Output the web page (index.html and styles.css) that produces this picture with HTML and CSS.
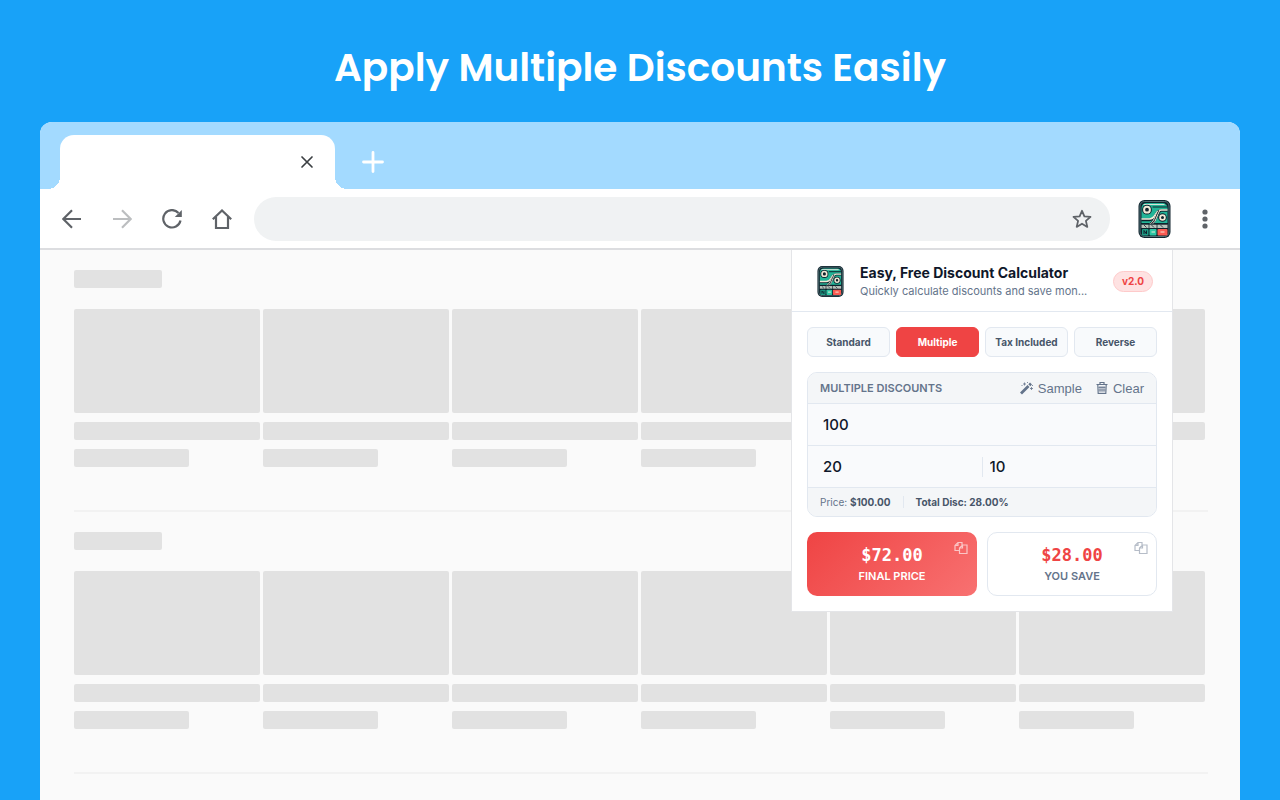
FILE: index.html
```html
<!doctype html>
<html lang="en">

<head>
  <meta charset="UTF-8">
  <title>Easy, Free Discount Calculator</title>
  <link rel="stylesheet" href="styles.css">
</head>

<body>
  <svg class="sprite" aria-hidden="true">
    <symbol id="logo" viewBox="0 0 32 38">
      <rect width="32" height="38" rx="6" fill="#10232d" />
      <rect x="1.5" y="1.5" width="29" height="35" rx="4.5" fill="none" stroke="#6f9495" stroke-width=".7" />
      <path d="M3 8a5 5 0 0 1 5-5h16a5 5 0 0 1 5 5v15H3z" fill="#22b497" />
      <path d="M5 4.500h21" stroke="#d9e4d8" stroke-width="1.200" />
      <path d="M14 7h15" stroke="#10232d" stroke-width="1.200" />
      <path d="M3 20h8c7 0 5-9.500 12-9.500h6" stroke="#10232d" stroke-width="2.400" fill="none" />
      <path d="M3 19h8c7 0 5-9 12-9h6" stroke="#f1ead7" stroke-width="1.600" fill="none" />
      <path d="M12 24c5-2 5-8 9-13" stroke="#10232d" stroke-width="3" fill="none" />
      <path d="M11 24c5-2 5-8 8-13M14 24c4-3 4-8 7-13" stroke="#f1ead7" stroke-width="1" fill="none" />
      <circle cx="8.500" cy="9.700" r="4.900" fill="#10232d" />
      <circle cx="8.500" cy="9.700" r="2.900" fill="#10232d" stroke="#f1ead7" stroke-width="2" />
      <circle cx="24" cy="17.500" r="4.300" fill="#10232d" />
      <circle cx="24" cy="17.500" r="2.400" fill="#10232d" stroke="#f1ead7" stroke-width="1.800" />
      <path d="M3 24.500h26V28H3z" fill="#b9c3bb" />
      <path d="M5.500 25l2.500 2.500M13 25l2.500 2.500M22 25l2.500 2.500" stroke="#10232d" stroke-width=".8" />
      <path d="M10.500 24v12M18.500 24v12M3 28.500h26M3 24h26" stroke="#10232d" stroke-width=".8" />
      <rect x="3.500" y="29" width="6.500" height="6.500" rx="1" fill="#1d9c85" />
      <rect x="11" y="29" width="7" height="6.500" rx="1" fill="#2fc7a5" />
      <rect x="19" y="29" width="10" height="6.500" rx="1" fill="#fa5b52" />
      <path d="M5.500 34v-3.500l2.500 3.500v-3.500" stroke="#10232d" fill="none" />
      <path d="M13 32h3.500M22 32h4" stroke="#f1ead7" stroke-width="1.200" />
    </symbol>
    <symbol id="copy" viewBox="0 0 14 14">
      <path d="M5.500 9.500H1v-5l3-3h4V4M1 4.500h3v-3M5.500 12.500V7l3-3H13v8.500zM5.500 7h3V4" fill="none" stroke="currentColor" stroke-width="1.200" />
    </symbol>
  </svg>

  <h1 class="headline">Apply Multiple Discounts Easily</h1>

  <div class="browser">
    <div class="tab-strip">
      <div class="browser-tab">
        <button class="icon-btn" aria-label="Close tab">
          <svg width="14" height="14" viewBox="0 0 14 14"><path d="M2 2l10 10M12 2L2 12" stroke="#3c4043" stroke-width="1.700" stroke-linecap="round" /></svg>
        </button>
      </div>
      <button class="icon-btn" aria-label="New tab">
        <svg width="22" height="22" viewBox="0 0 22 22"><path d="M11 1.500v19M1.500 11h19" stroke="#fff" stroke-width="2.800" stroke-linecap="round" /></svg>
      </button>
    </div>

    <div class="toolbar">
      <div class="nav">
        <button class="icon-btn" aria-label="Back">
          <svg width="20" height="20" viewBox="0 0 20 20"><path d="M19 10H1.500M10 1.300L1.300 10l8.700 8.700" class="line" /></svg>
        </button>
        <button class="icon-btn faded" aria-label="Forward">
          <svg width="20" height="20" viewBox="0 0 20 20"><path d="M1 10h17.500M10 1.300l8.700 8.700-8.700 8.700" class="line" /></svg>
        </button>
        <button class="icon-btn" aria-label="Reload">
          <svg width="20" height="20" viewBox="0 0 20 20"><path d="M18.500 11.500A8.700 8.700 0 1 1 16.500 4" class="line" /><path d="M19.800 1v7h-7z" fill="currentColor" /></svg>
        </button>
        <button class="icon-btn" aria-label="Home">
          <svg width="20" height="20" viewBox="0 0 20 20"><path d="M.8 10.300L10 1.500l9.200 8.800M4 8v11h12V8" class="line" /></svg>
        </button>
      </div>
      <div class="address">
        <input class="address-input" type="text" aria-label="Address">
        <button class="icon-btn" aria-label="Bookmark">
          <svg width="20" height="20" viewBox="0 0 20 20"><path d="M10 1.800l2.400 5.600 6.100.5-4.600 4 1.400 6L10 14.700 4.700 17.900l1.400-6-4.600-4 6.100-.5z" fill="none" stroke="currentColor" stroke-width="1.800" stroke-linejoin="round" /></svg>
        </button>
      </div>
      <button class="icon-btn" aria-label="Discount Calculator">
        <svg width="33" height="38"><use href="#logo" /></svg>
      </button>
      <button class="icon-btn menu-btn" aria-label="Menu">
        <svg width="6" height="20" viewBox="0 0 6 20" fill="currentColor"><circle cx="3" cy="3" r="2.600" /><circle cx="3" cy="10" r="2.600" /><circle cx="3" cy="17" r="2.600" /></svg>
      </button>
    </div>

    <div class="page">
      <section class="shelf">
        <div class="block title"></div>
        <div class="cards">
          <div class="card"><div class="block thumb"></div><div class="block"></div><div class="block short"></div></div>
          <div class="card"><div class="block thumb"></div><div class="block"></div><div class="block short"></div></div>
          <div class="card"><div class="block thumb"></div><div class="block"></div><div class="block short"></div></div>
          <div class="card"><div class="block thumb"></div><div class="block"></div><div class="block short"></div></div>
          <div class="card"><div class="block thumb"></div><div class="block"></div><div class="block short"></div></div>
          <div class="card"><div class="block thumb"></div><div class="block"></div><div class="block short"></div></div>
        </div>
      </section>
      <section class="shelf">
        <div class="block title"></div>
        <div class="cards">
          <div class="card"><div class="block thumb"></div><div class="block"></div><div class="block short"></div></div>
          <div class="card"><div class="block thumb"></div><div class="block"></div><div class="block short"></div></div>
          <div class="card"><div class="block thumb"></div><div class="block"></div><div class="block short"></div></div>
          <div class="card"><div class="block thumb"></div><div class="block"></div><div class="block short"></div></div>
          <div class="card"><div class="block thumb"></div><div class="block"></div><div class="block short"></div></div>
          <div class="card"><div class="block thumb"></div><div class="block"></div><div class="block short"></div></div>
        </div>
      </section>

      <main class="popup">
        <header class="popup-header">
          <svg width="27" height="31"><use href="#logo" /></svg>
          <div class="popup-heading">
            <h2>Easy, Free Discount Calculator</h2>
            <p>Quickly calculate discounts and save mon...</p>
          </div>
          <span class="version">v2.0</span>
        </header>

        <div class="popup-body">
          <nav class="modes">
            <button class="mode">Standard</button>
            <button class="mode active">Multiple</button>
            <button class="mode">Tax Included</button>
            <button class="mode">Reverse</button>
          </nav>

          <form class="calc">
            <div class="calc-header">
              <h3>MULTIPLE DISCOUNTS</h3>
              <button type="button" class="action">
                <svg width="13" height="14" viewBox="0 0 13 14"><path d="M1 12.500l7.500-7.500M9.300 4.200l1.700-1.700" stroke="currentColor" stroke-width="2.800" /><path d="M4.500 1.500v3M3 3h3M11.500 6v3M10 7.500h3M7.500 1v1M1.500 4.500h1M12 4.500h1" stroke="currentColor" stroke-width=".8" /></svg>
                Sample
              </button>
              <button type="button" class="action">
                <svg width="12" height="14" viewBox="0 0 12 14" fill="none" stroke="currentColor"><path d="M.5 3.500h11M4 3V1.500h4V3M1.800 3.500l.4 9h7.600l.4-9" stroke-width="1.200" /><path d="M4 5v6.500M6 5v6.500M8 5v6.500M2.500 6.500h7M2.500 9h7" stroke-width=".8" /></svg>
                Clear
              </button>
            </div>
            <div class="row">
              <input type="text" value="100" aria-label="Original price">
            </div>
            <div class="row">
              <input type="text" value="20" aria-label="First discount">
              <input type="text" value="10" aria-label="Second discount" class="split">
            </div>
            <div class="summary">
              <span>Price: <b>$100.00</b></span>
              <span class="total">Total Disc: 28.00%</span>
            </div>
          </form>

          <div class="results">
            <div class="result final">
              <strong>$72.00</strong>
              <span>FINAL PRICE</span>
              <button class="icon-btn copy" aria-label="Copy final price"><svg width="14" height="14"><use href="#copy" /></svg></button>
            </div>
            <div class="result">
              <strong>$28.00</strong>
              <span>YOU SAVE</span>
              <button class="icon-btn copy" aria-label="Copy savings"><svg width="14" height="14"><use href="#copy" /></svg></button>
            </div>
          </div>
        </div>
      </main>
    </div>
  </div>
</body>

</html>
```
FILE: styles.css
```css
* {
  box-sizing: border-box;
}

body {
  display: flex;
  flex-direction: column;
  min-height: 100vh;
  margin: 0;
  padding: 0 40px;
  background: #18a2f8;
  font-family: Inter, sans-serif;
}

h1,
h2,
h3,
p {
  margin: 0;
}

svg {
  display: block;
  flex: none;
}

button,
input {
  margin: 0;
  padding: 0;
  border: 0;
  background: none;
  font-family: inherit;
  color: inherit;
}

.sprite {
  position: absolute;
  width: 0;
  height: 0;
}

.headline {
  padding: 38px 0 24px;
  color: #fff;
  font: 600 39px/60px Poppins, Inter, sans-serif;
  text-align: center;
}

.icon-btn {
  display: flex;
  color: #5f6368;
}

.line {
  fill: none;
  stroke: currentColor;
  stroke-width: 2.2;
}

/* browser frame */
.browser {
  display: flex;
  flex: 1;
  flex-direction: column;
  border-radius: 12px 12px 0 0;
  background: #fafafa;
  overflow: hidden;
}

.tab-strip {
  display: flex;
  align-items: center;
  gap: 27px;
  padding: 13px 20px 0;
  background: #a3daff;
}

.browser-tab {
  position: relative;
  display: flex;
  align-items: center;
  justify-content: flex-end;
  width: 275px;
  height: 54px;
  padding-right: 21px;
  border-radius: 14px 14px 0 0;
  background: #fff;
}

/* curved feet of the tab */
.browser-tab::before,
.browser-tab::after {
  content: "";
  position: absolute;
  bottom: 0;
  width: 12px;
  height: 12px;
}

.browser-tab::before {
  right: 100%;
  background: radial-gradient(circle at 0 0, transparent 12px, #fff 12px);
}

.browser-tab::after {
  left: 100%;
  background: radial-gradient(circle at 100% 0, transparent 12px, #fff 12px);
}

.toolbar {
  display: flex;
  align-items: center;
  gap: 28px;
  padding: 8px 32px 7px 22px;
  border-bottom: 2px solid #dcdde0;
  background: #fff;
}

.nav {
  display: flex;
  gap: 30px;
}

.faded {
  color: #bcbec0;
}

.address {
  display: flex;
  flex: 1;
  align-items: center;
  height: 44px;
  margin-left: -6px;
  padding: 0 18px 0 20px;
  border-radius: 22px;
  background: #f0f2f3;
}

.address-input {
  flex: 1;
}

.menu-btn {
  margin-left: 3px;
}

/* placeholder page */
.page {
  position: relative;
  flex: 1;
  padding: 0 32px 0 34px;
}

.shelf {
  padding: 20px 3px 43px 0;
  border-bottom: 2px solid #f2f2f2;
}

.block {
  height: 18px;
  border-radius: 2px;
  background: #e2e2e2;
}

.block.title {
  width: 88px;
  margin-bottom: 21px;
}

.block.thumb {
  height: 104px;
}

.block.short {
  width: 62%;
}

.cards {
  display: grid;
  grid-template-columns: repeat(6, 1fr);
  gap: 3px;
}

.card {
  display: grid;
  gap: 9px;
}

/* extension popup */
.popup {
  position: absolute;
  top: 0;
  right: 67px;
  width: 382px;
  border: 1px solid #e4e5e8;
  border-top: 0;
  background: #fff;
  color: #475569;
}

.popup-header {
  display: flex;
  align-items: center;
  height: 62px;
  padding: 2px 19px 0 25px;
  border-bottom: 1px solid #e2e8f0;
}

.popup-heading {
  flex: 1;
  min-width: 0;
  margin: 0 16px;
}

.popup-heading h2 {
  color: #0f172a;
  font-size: 14px;
  font-weight: 700;
  line-height: 18px;
}

.popup-heading p {
  color: #64748b;
  font-size: 11px;
  line-height: 18px;
  white-space: nowrap;
}

.version {
  padding: 0 8px;
  border: 1px solid #fecaca;
  border-radius: 11px;
  background: #fee2e2;
  color: #ef4444;
  font-size: 10px;
  font-weight: 700;
  line-height: 19px;
}

.popup-body {
  display: grid;
  gap: 15px;
  padding: 15px;
}

.modes {
  display: grid;
  grid-template-columns: repeat(4, 1fr);
  gap: 6px;
}

.mode {
  height: 30px;
  border: 1px solid #e2e8f0;
  border-radius: 6px;
  background: #f8fafc;
  font-size: 10px;
  font-weight: 700;
}

.mode.active {
  border-color: #ef4444;
  background: #ef4444;
  color: #fff;
}

.calc {
  border: 1px solid #e2e8f0;
  border-radius: 10px;
  background: #f9fafc;
  overflow: hidden;
}

.calc-header,
.summary {
  display: flex;
  align-items: center;
  padding: 0 12px;
  background: #f4f6f8;
}

.calc-header {
  gap: 14px;
  height: 30px;
  color: #64748b;
}

.calc-header h3 {
  flex: 1;
  font-size: 11px;
  font-weight: 600;
}

.action {
  display: flex;
  align-items: center;
  gap: 5px;
  font: 13px "Liberation Sans", Arial, sans-serif;
}

.row {
  display: flex;
  align-items: center;
  height: 42px;
  padding: 0 8px;
  border-top: 1px solid #e2e8f0;
}

.row input {
  flex: 1;
  width: 0;
  height: 20px;
  padding: 0 7px;
  color: #0f172a;
  font-size: 15px;
  font-weight: 500;
}

.row .split {
  border-left: 1px solid #e2e8f0;
}

.summary {
  gap: 12px;
  height: 29px;
  border-top: 1px solid #e2e8f0;
  color: #64748b;
  font-size: 10px;
}

.summary b,
.total {
  color: #475569;
  font-weight: 700;
}

.total {
  padding-left: 12px;
  border-left: 1px solid #e2e8f0;
}

.results {
  display: grid;
  grid-template-columns: 1fr 1fr;
  gap: 10px;
}

.result {
  position: relative;
  display: flex;
  flex-direction: column;
  align-items: center;
  height: 64px;
  padding-top: 11px;
  border: 1px solid #e2e8f0;
  border-radius: 10px;
  color: #64748b;
  font-size: 11px;
  font-weight: 600;
  line-height: 20px;
}

.result strong {
  color: #ef4444;
  font: bold 17px/22px Consolas, "DejaVu Sans Mono", monospace;
}

.result.final {
  border-color: transparent;
  background: linear-gradient(135deg, #ef4444, #f87171) border-box;
  color: #fff;
}

.result.final strong {
  color: inherit;
}

.copy {
  position: absolute;
  top: 8px;
  right: 8px;
  color: #b6bdc8;
}

.final .copy {
  color: #fbc5c5;
}
```
